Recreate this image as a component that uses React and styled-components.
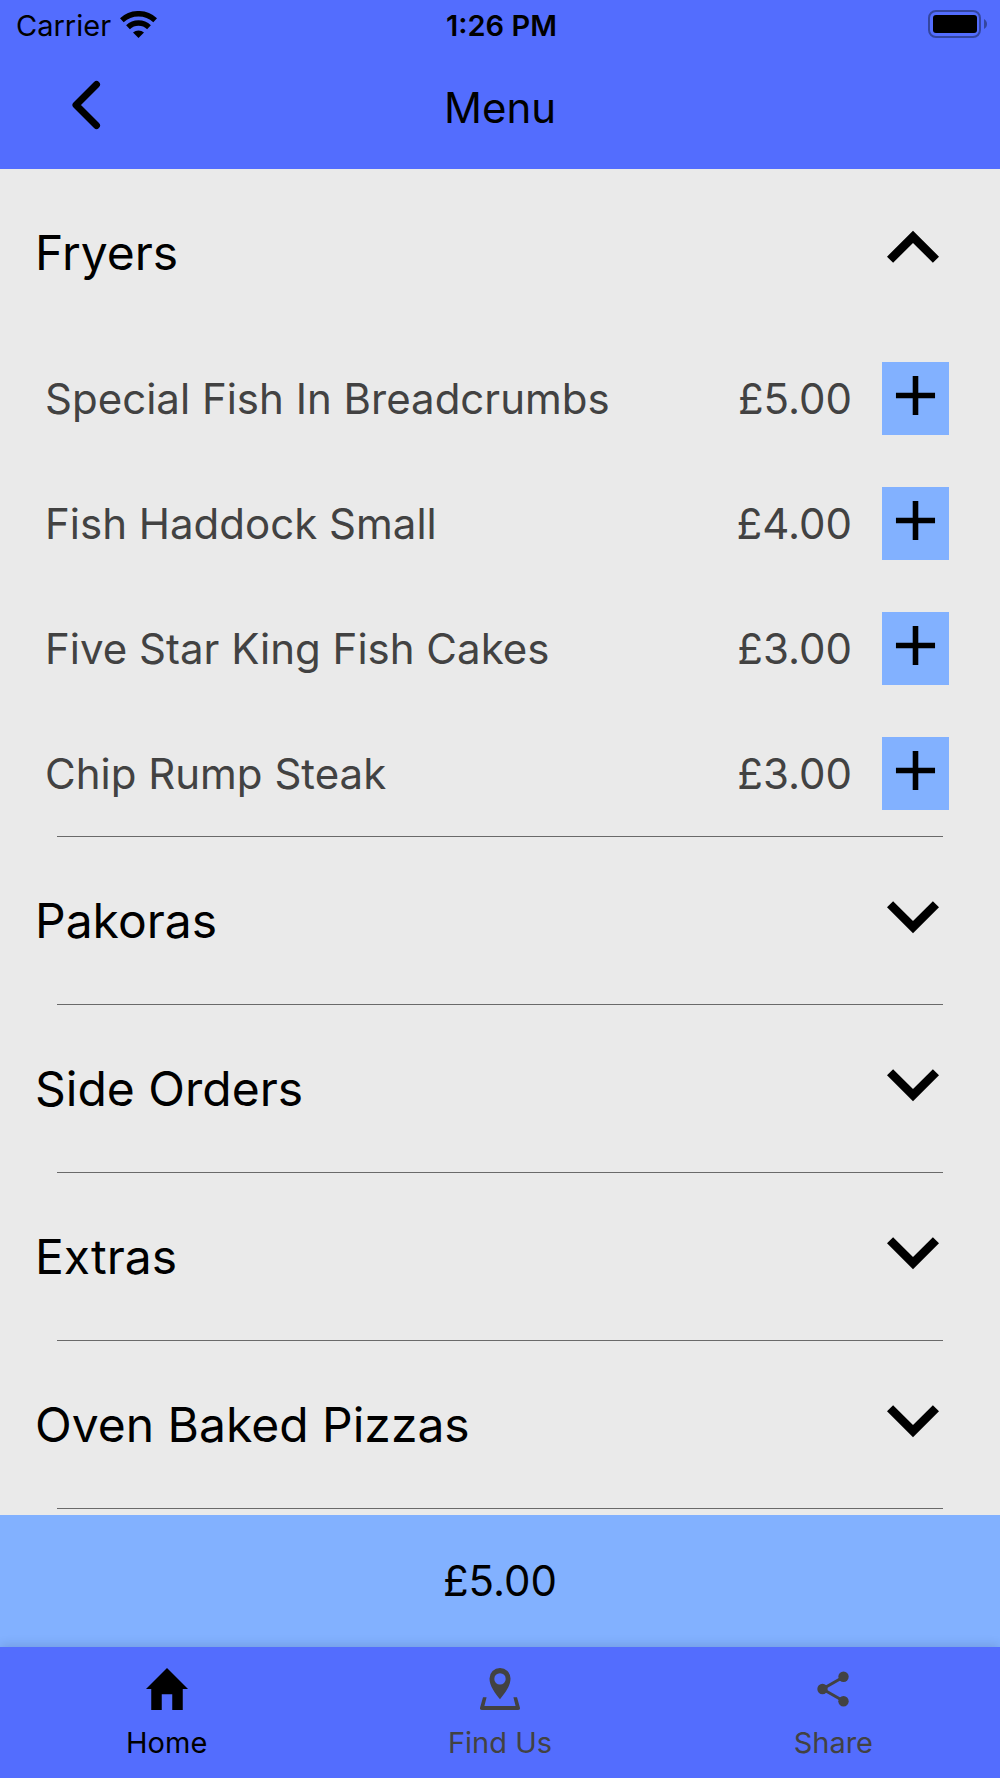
import React, { useState } from "react";
import styled, { createGlobalStyle } from "styled-components";

const GlobalStyle = createGlobalStyle`
  *, *::before, *::after { box-sizing: border-box; }
  body {
    margin: 0;
    background: #eaeaea;
    color: #000;
    font-family: Inter, "Liberation Sans", sans-serif;
  }
  button { font: inherit; color: inherit; border: 0; padding: 0; background: none; cursor: pointer; }
  h1, h2, p, ul { margin: 0; padding: 0; font-weight: 400; }
  svg { display: block; flex: none; }
`;

const Screen = styled.div`
  display: flex;
  flex-direction: column;
  min-height: 100vh;
`;

const Header = styled.header`
  background: #536dfe;
`;

const StatusBar = styled.div`
  display: grid;
  grid-template-columns: 1fr auto 1fr;
  align-items: center;
  height: 48px;
  padding: 4px 13px 0 16px;
  font-size: 29px;
  line-height: 32px;

  svg { margin-bottom: 4px; }
`;

const Carrier = styled.div`
  display: flex;
  align-items: center;
  gap: 9px;
`;

const Clock = styled.time`
  font-weight: 600;
`;

const Battery = styled.svg`
  justify-self: end;
`;

const TitleBar = styled.div`
  display: grid;
  grid-template-columns: 1fr auto 1fr;
  align-items: center;
  height: 121px;
  padding: 0 64px 2px;
`;

const BackButton = styled.button`
  justify-self: start;
  padding-bottom: 6px;
`;

const Title = styled.h1`
  font-size: 42px;
  line-height: 52px;
`;

const Sections = styled.main`
  flex: 1;
`;

const Section = styled.section`
  &::after {
    content: "";
    display: block;
    height: 1px;
    margin: 0 57px;
    background: #6a6a6a;
  }
`;

const SectionToggle = styled.button`
  display: flex;
  align-items: center;
  justify-content: space-between;
  width: 100%;
  height: 167px;
  padding: 0 35px;
  font-size: 48px;
  line-height: 64px;
  text-align: left;

  svg { margin-bottom: 10px; }
`;

const Items = styled.ul`
  list-style: none;
`;

const Item = styled.li`
  display: flex;
  align-items: center;
  height: 125px;
  padding: 0 51px 0 45px;
  color: #424242;
  font-size: 42px;
  line-height: 52px;
`;

const ItemName = styled.span`
  flex: 1;
`;

const AddButton = styled.button`
  display: flex;
  width: 67px;
  height: 73px;
  margin-left: 30px;
  color: #000;
  background: #82b1ff;
`;

const Basket = styled.button`
  height: 132px;
  background: #82b1ff;
  font-size: 42px;
  line-height: 52px;
`;

const Tabs = styled.nav`
  display: grid;
  grid-template-columns: repeat(3, 1fr);
  height: 131px;
  background: #536dfe;
  box-shadow: 0 -2px 10px rgba(0, 0, 0, 0.12);
`;

const Tab = styled.a`
  display: flex;
  flex-direction: column;
  align-items: center;
  gap: 17px;
  padding-top: 21px;
  color: ${(p) => (p.$active ? "#000" : "#424242")};
  font-size: 29px;
  line-height: 32px;
  text-decoration: none;
`;

const Chevron = ({ open }) => (
  <svg width="104" height="104" viewBox="0 0 24 24" fill="currentColor" aria-hidden="true">
    {open ? (
      <path d="M12 8l-6 6 1.41 1.41L12 10.83l4.59 4.58L18 14z" />
    ) : (
      <path d="M16.59 8.59L12 13.17 7.41 8.59 6 10l6 6 6-6z" />
    )}
  </svg>
);

const WifiIcon = () => (
  <svg width="37" height="27" viewBox="0 0 37 27" fill="none" stroke="#000" aria-hidden="true">
    <path d="M1.8 9.300a24.500 24.500 0 0 1 33.400 0" strokeWidth="5.500" />
    <path d="M8 16.200a15.300 15.300 0 0 1 21 0" strokeWidth="5.500" />
    <path d="M13 21.400a8.500 8.500 0 0 1 11 0L18.500 27z" fill="#000" stroke="none" />
  </svg>
);

const PlusIcon = () => (
  <svg width="67" height="67" viewBox="0 0 24 24" fill="currentColor" aria-hidden="true">
    <path d="M19 13h-6v6h-2v-6H5v-2h6V5h2v6h6v2z" />
  </svg>
);

const HomeIcon = () => (
  <svg width="42" height="42" viewBox="0 0 8 8" fill="currentColor" aria-hidden="true">
    <path d="M4 0L0 4h1v4h2V5h2v3h2V4h1z" />
  </svg>
);

const PinIcon = () => (
  <svg width="42" height="42" viewBox="0 0 42 42" fill="currentColor" aria-hidden="true">
    <path
      fillRule="evenodd"
      d="M21 0a10.500 10.500 0 0 0-10.500 10.500C10.500 18 16 25 21 31.300 26 25 31.500 18 31.500 10.500A10.500 10.500 0 0 0 21 0zm0 5.200a5.700 5.700 0 1 1 0 11.400 5.700 5.700 0 0 1 0-11.400z"
    />
    <path d="M4 29.300h3.600L5.400 38h31.200l-2.200-8.700H38l2.900 10.200c.4 1.400-.3 2.500-1.700 2.500H2.800c-1.400 0-2.100-1.100-1.700-2.500z" />
  </svg>
);

const ShareIcon = () => (
  <svg width="42" height="42" viewBox="0 0 42 42" fill="currentColor" aria-hidden="true">
    <path d="M31.500 9l-21 12 21 12" fill="none" stroke="currentColor" strokeWidth="3" />
    <circle cx="31.500" cy="8.800" r="5.200" />
    <circle cx="10.500" cy="21" r="5.200" />
    <circle cx="31.500" cy="33.200" r="5.200" />
  </svg>
);

const MENU = [
  {
    name: "Fryers",
    items: [
      { name: "Special Fish In Breadcrumbs", price: "£5.00" },
      { name: "Fish Haddock Small", price: "£4.00" },
      { name: "Five Star King Fish Cakes", price: "£3.00" },
      { name: "Chip Rump Steak", price: "£3.00" },
    ],
  },
  { name: "Pakoras", items: [] },
  { name: "Side Orders", items: [] },
  { name: "Extras", items: [] },
  { name: "Oven Baked Pizzas", items: [] },
];

const TABS = [
  { label: "Home", Icon: HomeIcon, active: true },
  { label: "Find Us", Icon: PinIcon },
  { label: "Share", Icon: ShareIcon },
];

export default function App() {
  const [openName, setOpenName] = useState("Fryers");

  return (
    <Screen>
      <GlobalStyle />
      <Header>
        <StatusBar>
          <Carrier>
            Carrier
            <WifiIcon />
          </Carrier>
          <Clock dateTime="13:26">1:26 PM</Clock>
          <Battery width="59" height="28" viewBox="0 0 59 28" aria-hidden="true">
            <rect x="1" y="1" width="51" height="26" rx="7" fill="none" stroke="#34469f" strokeWidth="2" />
            <rect x="5" y="5" width="44" height="18" rx="3" />
            <path d="M56 9c4 2 4 8 0 10z" fill="#34469f" />
          </Battery>
        </StatusBar>
        <TitleBar>
          <BackButton type="button" aria-label="Back">
            <svg width="44" height="52" viewBox="0 0 44 52" fill="none" stroke="#000" strokeWidth="7" strokeLinecap="round" strokeLinejoin="round" aria-hidden="true">
              <path d="M32.500 5.500L12 26l20.500 20.500" />
            </svg>
          </BackButton>
          <Title>Menu</Title>
        </TitleBar>
      </Header>

      <Sections>
        {MENU.map(({ name, items }) => {
          const open = name === openName;
          return (
            <Section key={name}>
              <h2>
                <SectionToggle type="button" aria-expanded={open} onClick={() => setOpenName(open ? null : name)}>
                  {name}
                  <Chevron open={open} />
                </SectionToggle>
              </h2>
              {open && (
                <Items>
                  {items.map((item) => (
                    <Item key={item.name}>
                      <ItemName>{item.name}</ItemName>
                      <span>{item.price}</span>
                      <AddButton type="button" aria-label={`Add ${item.name}`}>
                        <PlusIcon />
                      </AddButton>
                    </Item>
                  ))}
                </Items>
              )}
            </Section>
          );
        })}
      </Sections>

      <Basket type="button">£5.00</Basket>
      <Tabs>
        {TABS.map(({ label, Icon, active }) => (
          <Tab key={label} href="#" $active={active} aria-current={active ? "page" : undefined}>
            <Icon />
            {label}
          </Tab>
        ))}
      </Tabs>
    </Screen>
  );
}
